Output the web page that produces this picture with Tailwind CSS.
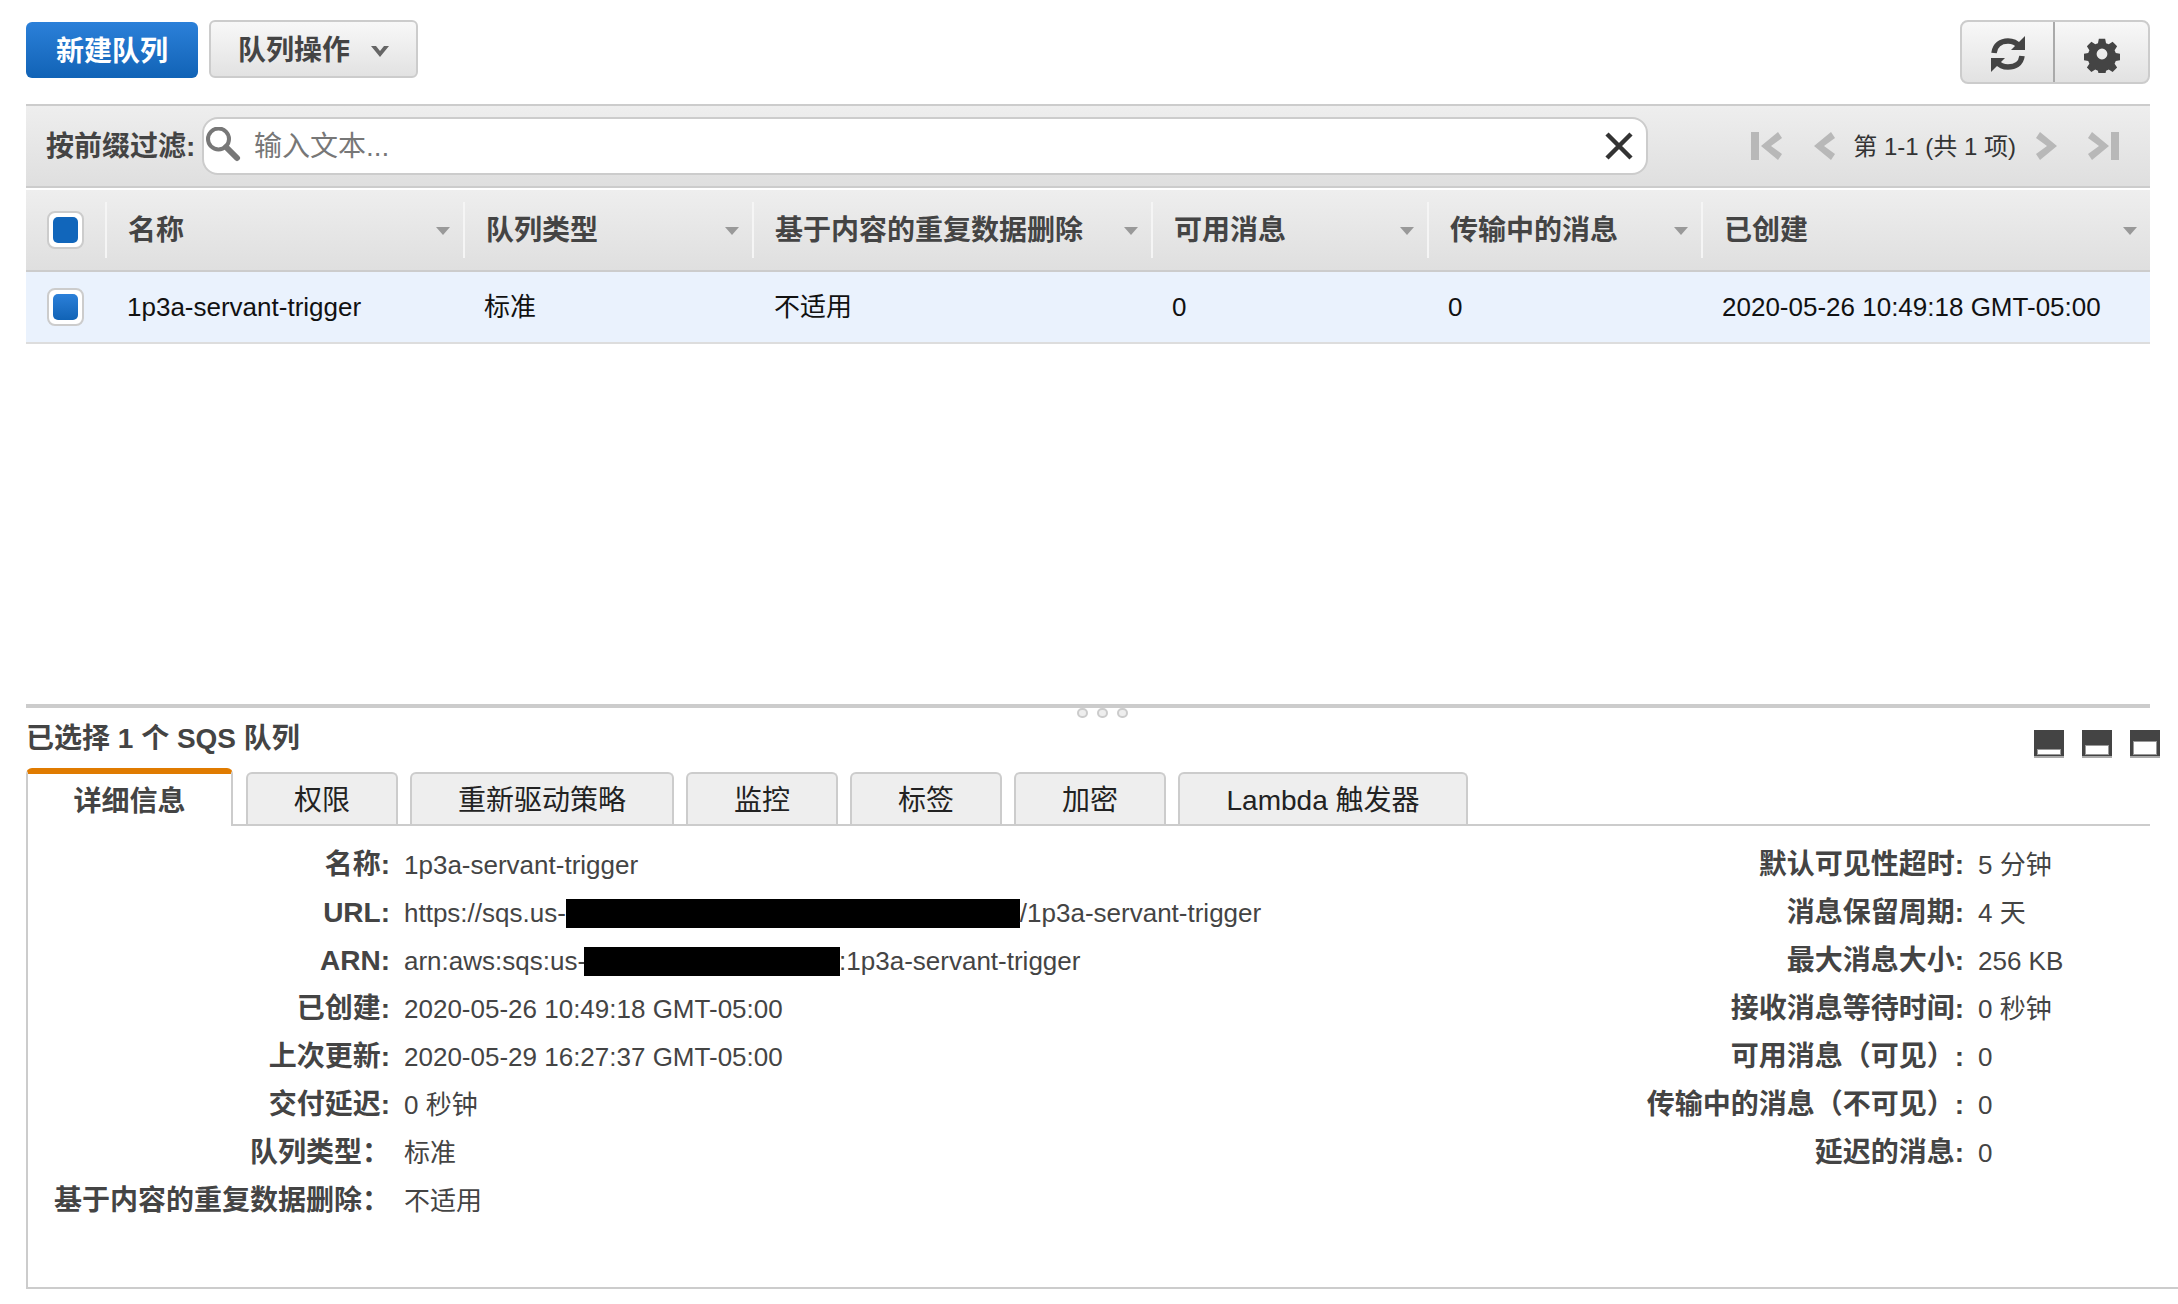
<!DOCTYPE html>
<html lang="zh-CN">
<head>
<meta charset="utf-8">
<title>SQS</title>
<script src="https://cdn.jsdelivr.net/npm/@tailwindcss/browser@4"></script>
</head>
<body class="bg-white">
<div class="w-[2178px] h-[1304px] overflow-hidden pl-[26px] pr-[28px] text-[26px] leading-[32px] text-[#444] font-['Liberation_Sans','Noto_Sans_CJK_SC',sans-serif]">

  <!-- toolbar -->
  <div class="h-[104px] pt-[20px] flex items-start">
    <button class="mt-[2px] pt-[3px] w-[172px] h-[56px] rounded-[6px] bg-gradient-to-b from-[#2b80d9] to-[#1063b6] text-white text-[28px] font-bold">新建队列</button>
    <button class="ml-[11px] w-[209px] h-[58px] rounded-[6px] border-2 border-[#ccc] bg-gradient-to-b from-[#f8f8f8] to-[#e2e2e2] text-[28px] font-bold text-[#444] flex items-center pl-[27px] pt-[3px] gap-[20px]">
      <span>队列操作</span>
      <svg width="20" height="14" viewBox="0 0 20 14"><path d="M1 2h5l4 5 4-5h5L10 13z" fill="#666"/></svg>
    </button>
    <div class="ml-auto w-[190px] h-[64px] rounded-[8px] border-2 border-[#ccc] bg-gradient-to-b from-[#f8f8f8] to-[#e2e2e2] flex">
      <div class="w-[93px] border-r-2 border-[#aaa] flex items-center justify-center pt-[4px]">
        <svg width="34" height="36" viewBox="0 0 34 36" fill="none"><path d="M3 17C4 9 10 5 17 5c4 0 8 1 11 5" stroke="#444" stroke-width="5.500"/><path d="M34 0v14H20z" fill="#444"/><path d="M31 20c-1 8-7 11-14 11-4 0-8-1-11-5" stroke="#444" stroke-width="5.500"/><path d="M0 36V22h14z" fill="#444"/></svg>
      </div>
      <div class="flex-1 flex items-center justify-center pt-[4px]">
        <svg width="36" height="38" viewBox="0 0 36 36"><path fill="#444" fill-rule="evenodd" d="M14.5 1h7l1 5 3 1.3 4.300-2.800 5 5-2.800 4.300 1.300 3 5 1v7l-5 1-1.300 3 2.800 4.300-5 5-4.300-2.800-3 1.300-1 5h-7l-1-5-3-1.300-4.300 2.800-5-5 2.800-4.300-1.300-3-5-1v-7l5-1 1.300-3L1.200 9.500l5-5 4.300 2.800 3-1.300zM18 12a6 6 0 1 0 0 12 6 6 0 0 0 0-12z" transform="translate(1.800 1.800) scale(.9)"/></svg>
      </div>
    </div>
  </div>

  <!-- filter bar -->
  <div class="h-[84px] border-t-2 border-b-2 border-[#ccc] bg-gradient-to-b from-[#eeeeee] to-[#dfdfdf] flex items-center pl-[20px]">
    <span class="text-[28px] font-bold w-[156px] shrink-0 pt-[2px]">按前缀过滤:</span>
    <div class="w-[1446px] h-[58px] rounded-[16px] border-2 border-[#ccc] bg-white flex items-center pl-[1px] pr-[12px]">
      <svg width="36" height="38" viewBox="0 0 36 38" fill="none"><circle cx="13.500" cy="12" r="10.500" stroke="#777" stroke-width="4"/><path d="M21 20l11 11" stroke="#777" stroke-width="6" stroke-linecap="round"/></svg>
      <span class="ml-[13px] pt-[2px] text-[#777] text-[28px]">输入文本...</span>
      <svg class="ml-auto" width="30" height="30" viewBox="0 0 30 30"><path d="M3 3l24 24M27 3L3 27" stroke="#333" stroke-width="4.500"/></svg>
    </div>
    <div class="ml-auto mr-[31px] flex items-center text-[#333] text-[24px]">
      <svg width="31" height="28" viewBox="0 0 31 28" fill="#b8b8b8"><rect x="0" y="0" width="8" height="28"/><path d="M27 0l4 6-11 8 11 8-4 6-17-14z"/></svg>
      <svg class="ml-[32px]" width="21" height="28" viewBox="0 0 21 28" fill="#b8b8b8"><path d="M17 0l4 6-11 8 11 8-4 6L0 14z"/></svg>
      <span class="ml-[18px] mr-[20px] pt-[1px]">第 1-1 (共 1 项)</span>
      <svg width="21" height="28" viewBox="0 0 21 28" fill="#b8b8b8"><path d="M4 0L0 6l11 8-11 8 4 6 17-14z"/></svg>
      <svg class="ml-[31px]" width="31" height="28" viewBox="0 0 31 28" fill="#b8b8b8"><rect x="23" y="0" width="8" height="28"/><path d="M4 0L0 6l11 8-11 8 4 6 17-14z"/></svg>
    </div>
  </div>

  <!-- table header -->
  <div class="mt-[2px] h-[82px] border-b-2 border-[#ccc] bg-gradient-to-b from-[#eeeeee] to-[#dfdfdf] grid grid-cols-[81px_358px_289px_399px_276px_274px_1fr] items-center text-[28px] font-bold">
    <div class="pl-[21px] h-[56px] flex items-center border-r-2 border-[#f5f5f5]">
      <span class="w-[37px] h-[38px] rounded-[8px] border-2 border-[#ccc] bg-white p-[4px] block"><span class="block w-full h-full rounded-[5px] bg-[#1166bb]"></span></span>
    </div>
    <div class="h-[56px] flex items-center justify-between pl-[21px] pr-[13px] pt-[2px] border-r-2 border-[#f5f5f5]"><span>名称</span><svg width="14" height="8"><path d="M0 0h14L7 8z" fill="#999"/></svg></div>
    <div class="h-[56px] flex items-center justify-between pl-[21px] pr-[13px] pt-[2px] border-r-2 border-[#f5f5f5]"><span>队列类型</span><svg width="14" height="8"><path d="M0 0h14L7 8z" fill="#999"/></svg></div>
    <div class="h-[56px] flex items-center justify-between pl-[21px] pr-[13px] pt-[2px] border-r-2 border-[#f5f5f5]"><span>基于内容的重复数据删除</span><svg width="14" height="8"><path d="M0 0h14L7 8z" fill="#999"/></svg></div>
    <div class="h-[56px] flex items-center justify-between pl-[21px] pr-[13px] pt-[2px] border-r-2 border-[#f5f5f5]"><span>可用消息</span><svg width="14" height="8"><path d="M0 0h14L7 8z" fill="#999"/></svg></div>
    <div class="h-[56px] flex items-center justify-between pl-[21px] pr-[13px] pt-[2px] border-r-2 border-[#f5f5f5]"><span>传输中的消息</span><svg width="14" height="8"><path d="M0 0h14L7 8z" fill="#999"/></svg></div>
    <div class="h-[56px] flex items-center justify-between pl-[21px] pr-[13px] pt-[2px]"><span>已创建</span><svg width="14" height="8"><path d="M0 0h14L7 8z" fill="#999"/></svg></div>
  </div>

  <!-- table row -->
  <div class="h-[72px] border-b-2 border-[#ddd] bg-[#eaf2fd] grid grid-cols-[81px_358px_289px_399px_276px_274px_1fr] items-center text-[#111]">
    <div class="pl-[21px] flex items-center">
      <span class="w-[37px] h-[38px] rounded-[8px] border-2 border-[#ccc] bg-white p-[4px] block"><span class="block w-full h-full rounded-[5px] bg-gradient-to-b from-[#2b80d9] to-[#1063b6]"></span></span>
    </div>
    <div class="pl-[20px]">1p3a-servant-trigger</div>
    <div class="pl-[19px]">标准</div>
    <div class="pl-[20px]">不适用</div>
    <div class="pl-[19px]">0</div>
    <div class="pl-[19px]">0</div>
    <div class="pl-[19px]">2020-05-26 10:49:18 GMT-05:00</div>
  </div>

  <!-- splitter -->
  <div class="mt-[360px] h-[4px] bg-[#ccc]"></div>
  <div class="relative h-0">
    <div class="absolute left-[1051px] top-0 flex gap-[9px]">
      <span class="w-[11px] h-[10px] rounded-full bg-[#eee] border-2 border-[#ccc]"></span>
      <span class="w-[11px] h-[10px] rounded-full bg-[#eee] border-2 border-[#ccc]"></span>
      <span class="w-[11px] h-[10px] rounded-full bg-[#eee] border-2 border-[#ccc]"></span>
    </div>
  </div>

  <!-- selection title -->
  <div class="h-[60px] flex items-center justify-between">
    <span class="text-[28px] font-bold pt-[2px]">已选择 1 个 SQS 队列</span>
    <div class="flex gap-[18px] mr-[-10px] mt-[12px]">
      <span class="w-[30px] h-[28px] bg-[#444] border-b-2 border-[#aaa] flex items-end px-[4px] pb-[2px]"><span class="block w-full h-[4px] bg-white ring-1 ring-[#999]"></span></span>
      <span class="w-[30px] h-[28px] bg-[#444] border-b-2 border-[#aaa] flex items-end px-[4px] pb-[2px]"><span class="block w-full h-[8px] bg-white ring-1 ring-[#999]"></span></span>
      <span class="w-[30px] h-[28px] bg-[#444] border-b-2 border-[#aaa] flex items-end px-[4px] pb-[2px]"><span class="block w-full h-[12px] bg-white ring-1 ring-[#999]"></span></span>
    </div>
  </div>

  <!-- tabs -->
  <div class="h-[58px] flex items-end text-[28px] border-b-2 border-[#ccc] text-[#222]">
    <div class="w-[207px] h-[58px] mb-[-2px] pt-[4px] rounded-t-[6px] border-t-[6px] border-[#e07b00] border-x-2 border-x-[#ccc] bg-white flex items-center justify-center font-bold text-[#444]">详细信息</div>
    <div class="ml-[13px] w-[152px] h-[52px] pt-[4px] rounded-t-[6px] border-2 border-b-0 border-[#ccc] bg-[#eee] flex items-center justify-center">权限</div>
    <div class="ml-[12px] w-[264px] h-[52px] pt-[4px] rounded-t-[6px] border-2 border-b-0 border-[#ccc] bg-[#eee] flex items-center justify-center">重新驱动策略</div>
    <div class="ml-[12px] w-[152px] h-[52px] pt-[4px] rounded-t-[6px] border-2 border-b-0 border-[#ccc] bg-[#eee] flex items-center justify-center">监控</div>
    <div class="ml-[12px] w-[152px] h-[52px] pt-[4px] rounded-t-[6px] border-2 border-b-0 border-[#ccc] bg-[#eee] flex items-center justify-center">标签</div>
    <div class="ml-[12px] w-[152px] h-[52px] pt-[4px] rounded-t-[6px] border-2 border-b-0 border-[#ccc] bg-[#eee] flex items-center justify-center">加密</div>
    <div class="ml-[12px] w-[290px] h-[52px] pt-[4px] rounded-t-[6px] border-2 border-b-0 border-[#ccc] bg-[#eee] flex items-center justify-center">Lambda 触发器</div>
  </div>

  <!-- details -->
  <div class="h-[463px] border-l-2 border-b-2 border-[#ccc] mr-[-28px] pt-[15px] flex justify-between">
    <div class="grid grid-cols-[362px_1fr] gap-x-[14px] auto-rows-[48px] items-center content-start">
      <b class="text-right text-[28px]">名称:</b><span>1p3a-servant-trigger</span>
      <b class="text-right text-[28px]">URL:</b><span class="flex items-center">https://sqs.us-<i class="block w-[454px] h-[29px] bg-black"></i>/1p3a-servant-trigger</span>
      <b class="text-right text-[28px]">ARN:</b><span class="flex items-center">arn:aws:sqs:us-<i class="block w-[256px] h-[29px] ml-[-2px] mr-[-1px] bg-black"></i>:1p3a-servant-trigger</span>
      <b class="text-right text-[28px]">已创建:</b><span>2020-05-26 10:49:18 GMT-05:00</span>
      <b class="text-right text-[28px]">上次更新:</b><span>2020-05-29 16:27:37 GMT-05:00</span>
      <b class="text-right text-[28px]">交付延迟:</b><span>0 秒钟</span>
      <b class="text-right text-[28px] whitespace-nowrap">队列类型：</b><span>标准</span>
      <b class="text-right text-[28px] whitespace-nowrap">基于内容的重复数据删除：</b><span>不适用</span>
    </div>
    <div class="w-[652px] grid grid-cols-[438px_1fr] gap-x-[14px] auto-rows-[48px] items-center content-start">
      <b class="text-right text-[28px]">默认可见性超时:</b><span>5 分钟</span>
      <b class="text-right text-[28px]">消息保留周期:</b><span>4 天</span>
      <b class="text-right text-[28px]">最大消息大小:</b><span>256 KB</span>
      <b class="text-right text-[28px]">接收消息等待时间:</b><span>0 秒钟</span>
      <b class="text-right text-[28px]">可用消息（可见）:</b><span>0</span>
      <b class="text-right text-[28px]">传输中的消息（不可见）:</b><span>0</span>
      <b class="text-right text-[28px]">延迟的消息:</b><span>0</span>
    </div>
  </div>
</div>
</body>
</html>
